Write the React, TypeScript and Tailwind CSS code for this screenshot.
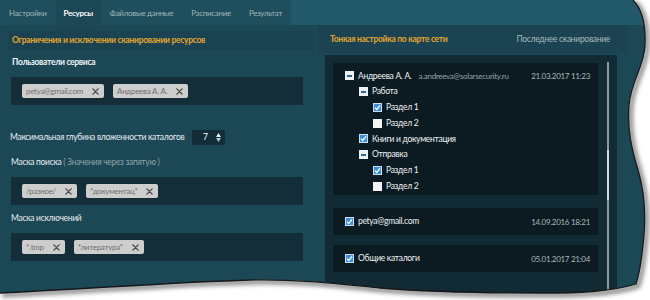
import React from "react";

const font = { fontFamily: 'Lato, "Noto Sans", sans-serif' };

function X() {
  return (
    <svg width="7" height="7" viewBox="0 0 8 8" className="shrink-0">
      <path d="M1 1 L7 7 M7 1 L1 7" stroke="#4a4a4a" strokeWidth="1.6" strokeLinecap="round" />
    </svg>
  );
}

function Tag({ text }: { text: string }) {
  return (
    <div className="flex items-center h-[14px] rounded-[2px] bg-[#cdcdcd] pl-[4px] pr-[5px] gap-[9px]">
      <span className="text-[8px] leading-none text-[#707070]">{text}</span>
      <X />
    </div>
  );
}

function TagBox({ tags }: { tags: string[] }) {
  return (
    <div className="ml-[3px] w-[292px] h-[28px] bg-[#132e39] flex items-center pl-[11px] gap-[9px]">
      {tags.map((t) => (
        <Tag key={t} text={t} />
      ))}
    </div>
  );
}

type CbState = "checked" | "unchecked" | "minus";

function Cb({ state }: { state: CbState }) {
  if (state === "checked")
    return (
      <div className="w-[9px] h-[9px] shrink-0 bg-[#3a8ee0] border border-[#cfe0f0] flex items-center justify-center">
        <svg width="7" height="7" viewBox="0 0 8 8">
          <path d="M1.2 4.4 L3.2 6.3 L6.8 1.6" stroke="#ffffff" strokeWidth="1.5" fill="none" />
        </svg>
      </div>
    );
  if (state === "minus")
    return (
      <div className="w-[9px] h-[9px] shrink-0 bg-[#eef2f5] flex items-center justify-center">
        <div className="w-[5px] h-[2px] bg-[#2f6790]" />
      </div>
    );
  return <div className="w-[9px] h-[9px] shrink-0 bg-[#f4f4f4]" />;
}

const rows: { level: number; state: CbState; label: string }[] = [
  { level: 1, state: "minus", label: "Работа" },
  { level: 2, state: "checked", label: "Раздел 1" },
  { level: 2, state: "unchecked", label: "Раздел 2" },
  { level: 1, state: "checked", label: "Книги и документация" },
  { level: 1, state: "minus", label: "Отправка" },
  { level: 2, state: "checked", label: "Раздел 1" },
  { level: 2, state: "unchecked", label: "Раздел 2" },
];

function TornEdge() {
  const edge =
    "M633 0 C641 8 646 22 645 45 C644 68 631 80 629 105 C627 130 632 150 638 170 C644 190 646 210 644 235 C642 258 640 272 636 284 C610 292 580 293 540 293 C480 293 430 292 380 288 C340 284 300 279 250 280 C180 282 100 288 0 293";
  const outside = edge + " L0 300 L650 300 L650 0 Z";
  return (
    <svg className="absolute inset-0 pointer-events-none" width="650" height="300" viewBox="0 0 650 300">
      <defs>
        <clipPath id="out">
          <path d={outside} />
        </clipPath>
        <filter id="blur" x="-10%" y="-10%" width="120%" height="120%">
          <feGaussianBlur stdDeviation="2" />
        </filter>
      </defs>
      <path d={outside} fill="#ffffff" />
      <g clipPath="url(#out)">
        <path d={edge} transform="translate(2 2)" stroke="#000" strokeOpacity="0.45" strokeWidth="5" fill="none" filter="url(#blur)" />
      </g>
      <path d={edge} stroke="#15191b" strokeWidth="1.3" fill="none" />
    </svg>
  );
}

export default function App() {
  const tabs = ["Настройки", "Ресурсы", "Файловые данные", "Расписание", "Результат"];
  return (
    <div className="relative w-[650px] h-[300px] overflow-hidden bg-[#1d4a58] tracking-[-0.3px]" style={font}>
      {/* tabs */}
      <div className="flex h-[25px] bg-[#22596a]">
        {tabs.map((t, i) => (
          <div
            key={t}
            className={
              i === 1
                ? "h-full flex items-center px-[8px] bg-[#1c4755] text-[8px] font-bold text-white"
                : "h-full flex items-center px-[9px] bg-[#1f4e5c] text-[8px] text-[#9fb4bb]"
            }
          >
            {t}
          </div>
        ))}
      </div>

      <div className="flex h-[275px] bg-[#1c4755]">
        {/* left column */}
        <div className="w-[316px] pl-[8px] flex flex-col">
          <div className="mt-[6px] w-[306px] h-[19px] bg-[#1a4250] flex items-center pl-[4px]">
            <span className="text-[8.5px] font-bold text-[#e3a630]">Ограничения и исключении сканировании ресурсов</span>
          </div>
          <div className="mt-[6px] ml-[4px] h-[12px] flex items-center text-[8.5px] font-bold text-[#f0f4f5]">
            Пользователи сервиса
          </div>
          <div className="mt-[9px]">
            <TagBox tags={["petya@gmail.com", "Андреева А. А."]} />
          </div>
          <div className="mt-[25px] ml-[2px] flex items-center h-[15px]">
            <div className="w-[182px] text-[8.5px] text-[#e6ecee] whitespace-nowrap">Максимальная глубина вложенности каталогов</div>
            <div className="w-[33px] h-[15px] bg-[#132d38] flex items-center pl-[11px] gap-[8px]">
              <span className="text-[8.5px] text-white">7</span>
              <div className="flex flex-col gap-[1px]">
                <svg width="5" height="4" viewBox="0 0 5 4"><path d="M2.5 0 L5 4 L0 4 Z" fill="#e8eef0" /></svg>
                <svg width="5" height="4" viewBox="0 0 5 4"><path d="M0 0 L5 0 L2.5 4 Z" fill="#b8c4c8" /></svg>
              </div>
            </div>
          </div>
          <div className="mt-[11px] ml-[3px] h-[12px] flex items-center text-[8.5px] text-[#e6ecee] whitespace-pre">
            Маска поиска<span className="text-[#8ea3aa]"> ( Значения через запятую )</span>
          </div>
          <div className="mt-[9px]">
            <TagBox tags={["/разное/", "*документац*"]} />
          </div>
          <div className="mt-[7px] ml-[3px] h-[12px] flex items-center text-[8.5px] text-[#e6ecee]">Маска исключений</div>
          <div className="mt-[9px]">
            <TagBox tags={["*.tmp", "*литература*"]} />
          </div>
        </div>

        {/* right column */}
        <div className="flex-1 flex flex-col">
          <div className="ml-[2px] w-[310px] h-[28px] bg-[#1b4351] flex items-center justify-between pl-[12px] pr-[18px]">
            <span className="text-[8.5px] font-bold text-[#e3a630]">Тонкая настройка по карте сети</span>
            <span className="text-[8.5px] text-[#a9b8bd]">Последнее сканирование</span>
          </div>
          <div className="mt-[2px] ml-[9px] w-[292px] flex-1 bg-[#112a33] flex pl-[8px] pr-[8px] pt-[8px]">
            <div className="w-[265px] flex flex-col">
              <div className="bg-[#0b1b21] pt-[5px] pb-[1px]">
                <div className="h-[15.75px] flex items-center pl-[12px] pr-[8px] gap-[4px]">
                  <Cb state="minus" />
                  <span className="text-[8.5px] text-[#eef2f3]">Андреева А. А.</span>
                  <span className="ml-[3px] text-[8px] text-[#93a3a8]">a.andreeva@solarsecurity.ru</span>
                  <span className="ml-auto text-[8px] text-[#aab6ba]">21.03.2017 11:23</span>
                </div>
                {rows.map((r, i) => (
                  <div
                    key={i}
                    className={
                      "h-[15.75px] flex items-center gap-[4px] " + (r.level === 1 ? "pl-[26px]" : "pl-[40px]")
                    }
                  >
                    <Cb state={r.state} />
                    <span className="text-[8.5px] text-[#eef2f3]">{r.label}</span>
                  </div>
                ))}
              </div>
              <div className="mt-[13px] h-[27px] bg-[#0b1b21] flex items-center pl-[12px] pr-[8px] gap-[4px]">
                <Cb state="checked" />
                <span className="text-[8.5px] text-[#eef2f3]">petya@gmail.com</span>
                <span className="ml-auto text-[8px] text-[#aab6ba]">14.09.2016 18:21</span>
              </div>
              <div className="mt-[10px] h-[27px] bg-[#0b1b21] flex items-center pl-[12px] pr-[8px] gap-[4px]">
                <Cb state="checked" />
                <span className="text-[8.5px] text-[#eef2f3]">Общие каталоги</span>
                <span className="ml-auto text-[8px] text-[#aab6ba]">05.01.2017 21:04</span>
              </div>
            </div>
            <div className="ml-[9px] w-[2px] mt-[-1px] bg-[#8d999d] flex flex-col">
              <div className="mt-[88px] h-[50px] bg-[#d6dcde]" />
            </div>
          </div>
        </div>
      </div>
      <TornEdge />
    </div>
  );
}
